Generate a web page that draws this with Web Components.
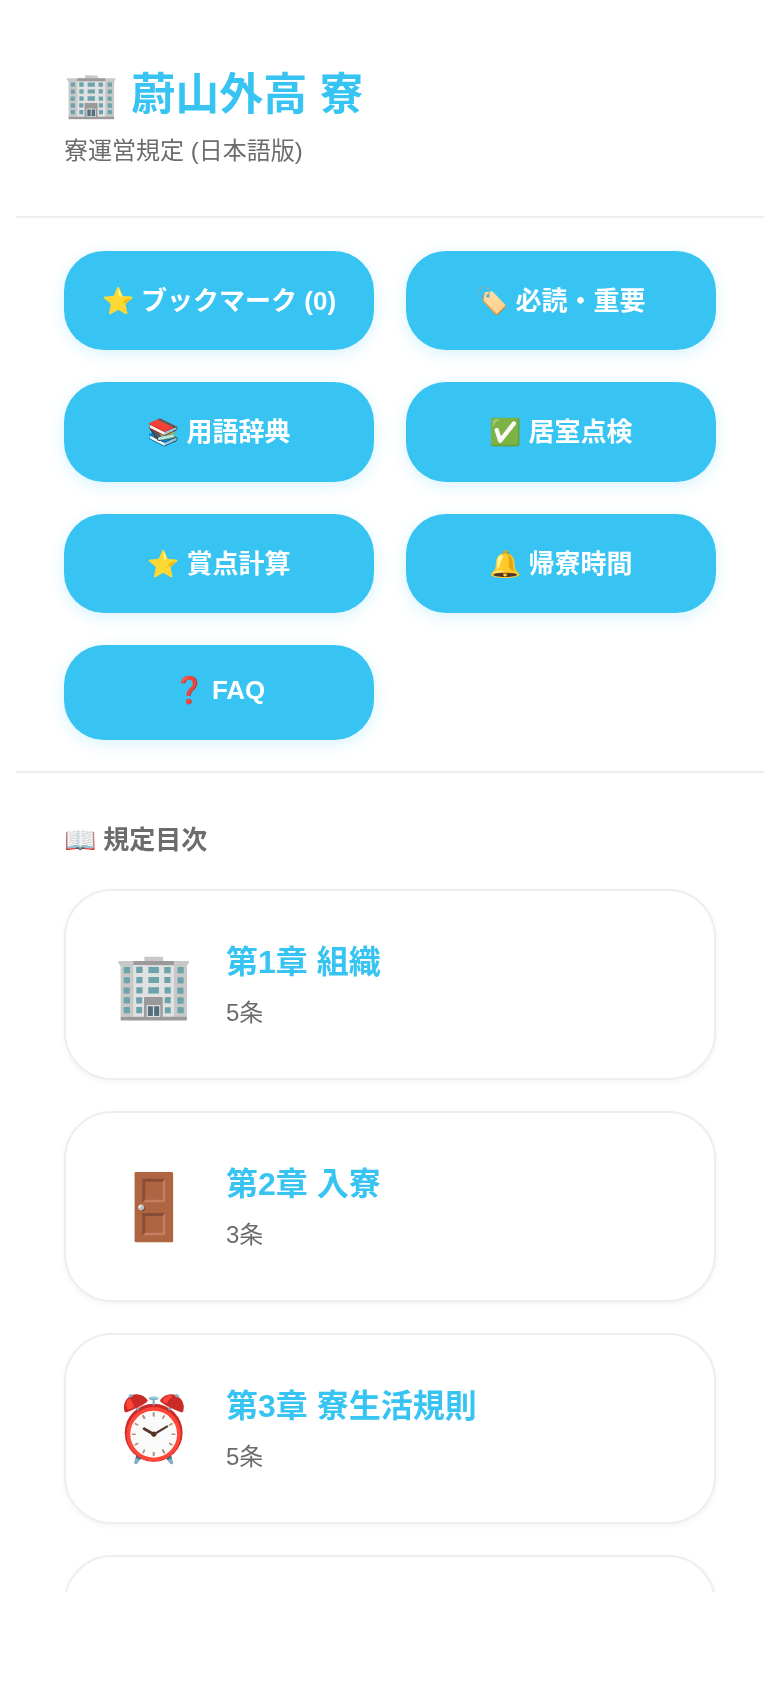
<!DOCTYPE html>
<html lang="ja">
<head>
<meta charset="utf-8">
<title>蔚山外高 寮</title>
<style>
  html, body { margin: 0; background: #fff; }
  body { font-family: "Liberation Sans", "Noto Sans CJK JP", sans-serif; }
</style>
</head>
<body>
<dorm-app>
  <dorm-header slot="header" title-text="蔚山外高 寮" icon="🏢">寮運営規定 (日本語版)</dorm-header>
  <dorm-action slot="actions" icon="⭐">ブックマーク (0)</dorm-action>
  <dorm-action slot="actions" icon="🏷️">必読・重要</dorm-action>
  <dorm-action slot="actions" icon="📚">用語辞典</dorm-action>
  <dorm-action slot="actions" icon="✅">居室点検</dorm-action>
  <dorm-action slot="actions" icon="⭐">賞点計算</dorm-action>
  <dorm-action slot="actions" icon="🔔">帰寮時間</dorm-action>
  <dorm-action slot="actions" icon="❓">FAQ</dorm-action>
  <dorm-chapter slot="chapters" icon="🏢" name="第1章 組織" count="5条"></dorm-chapter>
  <dorm-chapter slot="chapters" icon="🚪" name="第2章 入寮" count="3条"></dorm-chapter>
  <dorm-chapter slot="chapters" icon="⏰" name="第3章 寮生活規則" count="5条"></dorm-chapter>
  <dorm-chapter slot="chapters"></dorm-chapter>
</dorm-app>

<script>
const FONT = `"Liberation Sans", "Noto Sans CJK JP", sans-serif`;

class DormApp extends HTMLElement {
  constructor() {
    super();
    this.attachShadow({ mode: "open" });
    this.shadowRoot.innerHTML = `
      <style>
        :host { display: block; width: 748px; height: 1592px; margin-left: 16px; overflow: hidden; font-family: ${FONT}; filter: blur(0.5px); }
        .actions {
          display: grid;
          grid-template-columns: 1fr 1fr;
          gap: 32px;
          padding: 33px 48px 31px;
          border-bottom: 2px solid #eeeeee;
        }
        .toc { padding: 46px 48px 0; }
        h2 { margin: 0 0 33px; font-size: 26px; font-weight: bold; color: #6c6c6c; }
        .list { display: flex; flex-direction: column; gap: 31px; }
      </style>
      <slot name="header"></slot>
      <div class="actions"><slot name="actions"></slot></div>
      <div class="toc">
        <h2>📖 規定目次</h2>
        <div class="list"><slot name="chapters"></slot></div>
      </div>`;
  }
}

class DormHeader extends HTMLElement {
  constructor() {
    super();
    this.attachShadow({ mode: "open" });
    this.shadowRoot.innerHTML = `
      <style>
        :host { display: block; padding: 63px 48px 50px; border-bottom: 2px solid #eeeeee; }
        h1 { margin: 0 0 4px; font-size: 44px; line-height: 64px; font-weight: bold; color: #38c4f2; }
        p { margin: 0; font-size: 24px; color: #6c6c6c; }
      </style>
      <h1></h1>
      <p><slot></slot></p>`;
    this.shadowRoot.querySelector("h1").textContent =
      this.getAttribute("icon") + " " + this.getAttribute("title-text");
  }
}

class DormAction extends HTMLElement {
  constructor() {
    super();
    this.attachShadow({ mode: "open" });
    this.shadowRoot.innerHTML = `
      <style>
        :host {
          display: grid;
          place-items: center;
          box-sizing: border-box;
          min-height: 95px;
          padding: 29px 8px 33.4px;
          border-radius: 40px;
          background: #38c4f2;
          color: #fff;
          font-size: 26px;
          font-weight: bold;
          text-align: center;
          box-shadow: 0 4px 16px rgba(56, 196, 242, 0.2);
        }
      </style>
      <div><span id="icon"></span> <slot></slot></div>`;
    this.shadowRoot.getElementById("icon").textContent = this.getAttribute("icon");
  }
}

class DormChapter extends HTMLElement {
  constructor() {
    super();
    this.attachShadow({ mode: "open" });
    this.shadowRoot.innerHTML = `
      <style>
        :host {
          display: flex;
          align-items: center;
          gap: 32px;
          box-sizing: border-box;
          min-height: 191px;
          padding: 0 48px;
          border: 2px solid #eeeeee;
          border-radius: 48px;
          background: #fff;
          box-shadow: 0 2px 6px rgba(0, 0, 0, 0.05);
        }
        .icon { font-size: 64px; line-height: 1; }
        .text { padding-bottom: 5px; }
        .name { font-size: 32px; font-weight: bold; color: #38c4f2; margin-bottom: 11px; }
        .count { font-size: 24px; color: #6c6c6c; }
      </style>
      <div class="icon"></div>
      <div class="text">
        <div class="name"></div>
        <div class="count"></div>
      </div>`;
    const root = this.shadowRoot;
    root.querySelector(".icon").textContent = this.getAttribute("icon");
    root.querySelector(".name").textContent = this.getAttribute("name");
    root.querySelector(".count").textContent = this.getAttribute("count");
  }
}

customElements.define("dorm-app", DormApp);
customElements.define("dorm-header", DormHeader);
customElements.define("dorm-action", DormAction);
customElements.define("dorm-chapter", DormChapter);
</script>
</body>
</html>
